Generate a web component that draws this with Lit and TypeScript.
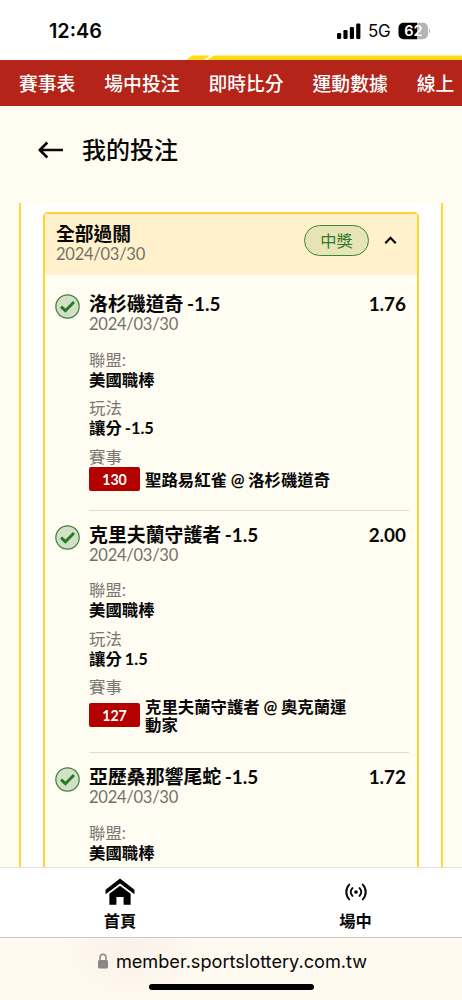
import { LitElement, html, css, svg } from "lit";
import { customElement, property } from "lit/decorators.js";

interface Leg {
  pick: string;
  date: string;
  odds: string;
  league: string;
  play: string;
  code: string;
  match: string;
}

const LEGS: Leg[] = [
  { pick: "洛杉磯道奇 -1.5", date: "2024/03/30", odds: "1.76", league: "美國職棒", play: "讓分 -1.5", code: "130", match: "聖路易紅雀 @ 洛杉磯道奇" },
  { pick: "克里夫蘭守護者 -1.5", date: "2024/03/30", odds: "2.00", league: "美國職棒", play: "讓分 1.5", code: "127", match: "克里夫蘭守護者 @ 奧克蘭運動家" },
  { pick: "亞歷桑那響尾蛇 -1.5", date: "2024/03/30", odds: "1.72", league: "美國職棒", play: "", code: "", match: "" },
];

@customElement("bet-leg")
export class BetLeg extends LitElement {
  @property({ attribute: false }) leg!: Leg;

  static styles = css`
    :host { display: flex; flex: none; padding: 0 8px 0 10px; }
    .check { flex: none; width: 25px; height: 25px; margin: 14px 9px 0 0; display: block; }
    .body { flex: 1; min-width: 0; padding: 14px 0 19px; border-bottom: 1px solid #dedbd3; }
    .top { display: flex; justify-content: space-between; padding-right: 3px; font-size: 18.9px; line-height: 20px; font-weight: 700; white-space: nowrap; word-spacing: -1px; }
    .date { font-size: 16.5px; line-height: 20px; letter-spacing: -0.25px; color: #73716c; margin-bottom: 15.5px; }
    .label { font-size: 16.4px; line-height: 19px; color: #7a7772; }
    .value { font-size: 16.4px; line-height: 21px; font-weight: 700; margin-bottom: 8.6px; word-spacing: -1px; }
    .match { display: flex; align-items: center; gap: 5px; padding-top: 1px; }
    .code { flex: none; width: 51px; height: 24px; border-radius: 2px; background: #b50000; color: #fff; font-size: 14.2px; line-height: 25px; font-weight: 700; text-align: center; }
    .teams { position: relative; top: 1px; width: 207px; font-size: 16.4px; line-height: 18px; font-weight: 700; word-spacing: -0.3px; }
  `;

  render() {
    const l = this.leg;
    return html`
      <svg class="check" viewBox="0 0 24 24" fill="none">
        <circle cx="12" cy="12" r="11.2" fill="#d3dfc8" stroke="#3f8539" stroke-width="1.2" />
        <path d="M5.8 12.100 10 16 18.200 7.700" stroke="#267b1d" stroke-width="2.800" />
      </svg>
      <div class="body">
        <div class="top"><span>${l.pick}</span><span>${l.odds}</span></div>
        <div class="date">${l.date}</div>
        <div class="label">聯盟:</div>
        <div class="value">${l.league}</div>
        ${l.play
          ? html`<div class="label">玩法</div>
              <div class="value">${l.play}</div>
              <div class="label">賽事</div>
              <div class="match"><span class="code">${l.code}</span><span class="teams">${l.match}</span></div>`
          : ""}
      </div>
    `;
  }
}

@customElement("app-root")
export class AppRoot extends LitElement {
  static styles = css`
    :host { display: flex; flex-direction: column; width: 462px; height: 1000px; overflow: hidden; background: #fffcf2; color: #080808; font-family: Lato, "Noto Sans CJK TC", sans-serif; }
    .status { flex: none; height: 55px; background: #fff; display: flex; align-items: center; box-sizing: border-box; padding: 7px 30px 0 49px; font-family: Inter, sans-serif; }
    .time { font-size: 19.8px; font-weight: 600; flex: 1; }
    .signal { width: 24px; height: 16px; margin-right: 7px; }
    .net { font-size: 17px; font-weight: 400; margin-right: 8px; width: 22px; letter-spacing: -0.4px; }
    .battery { width: 34px; height: 18px; }
    .stripe { flex: none; display: block; width: 462px; height: 5px; background: #fff; }
    .nav { flex: none; height: 46px; box-sizing: border-box; background: #b42419; color: #fff; display: flex; align-items: center; gap: 29px; padding: 0 0 2px 19px; font-size: 18.8px; font-weight: 500; white-space: nowrap; overflow: hidden; }
    .head { flex: none; height: 97px; box-sizing: border-box; padding: 0 0 9px 38px; display: flex; align-items: center; gap: 19px; font-size: 24px; font-weight: 500; }
    .head span { padding-bottom: 3px; }
    .back { width: 25px; height: 20px; }
    .panel { flex: 1; min-height: 0; overflow: hidden; margin: 0 19px; padding: 9px 22px 0 22px; background: #fff; border: solid #ffd92f; border-width: 0 2px; }
    .card { border: 2px solid #ffd52b; border-radius: 5px; background: #fffcf2; display: flex; flex-direction: column; }
    .summary { height: 61px; margin-bottom: 5px; box-sizing: border-box; background: #fef1cb; display: flex; align-items: flex-start; padding: 10px 20px 0 11px; }
    .names { flex: 1; }
    .kind { font-size: 18.8px; line-height: 20px; font-weight: 700; }
    .when { font-size: 16.5px; line-height: 20px; letter-spacing: -0.25px; color: #73716c; }
    .won { width: 63px; height: 29px; border: 1px solid #3f8539; border-radius: 16px; background: #e7e5b8; color: #2f7a27; text-align: center; font-size: 16.3px; line-height: 30px; font-weight: 400; margin: 1px 15px 0 0; }
    .caret { width: 13px; height: 10px; margin-top: 11px; }
    .tabs { flex: none; height: 71px; box-sizing: border-box; background: #fff; border-top: 1px solid #e5e4e2; border-bottom: 1px solid #cfcdc9; display: grid; grid-template-columns: 240px 231px; }
    .tab { display: flex; flex-direction: column; align-items: center; font-size: 16.3px; font-weight: 700; line-height: 20px; padding-top: 9px; gap: 4.5px; }
    .glyph { width: 32px; height: 29px; }
    .url { flex: none; height: 62px; display: flex; flex-direction: column; align-items: center; background: radial-gradient(ellipse 80px 60px at 130px 10px, #fbf1e8, transparent), #fffaf0; }
    .address { display: flex; align-items: center; gap: 7px; height: 46px; padding-left: 2px; font-family: Inter, sans-serif; font-size: 18.15px; white-space: nowrap; }
    .lock { width: 12px; height: 16px; }
    .bar { width: 165px; height: 6px; border-radius: 3px; background: #000; }
  `;

  private home = svg`
    <path d="M16 1.500 31 13.2V17.800L16 6.600 1 17.800V13.2Z" fill="#000" />
    <path d="M16 9 27 17.2V28.600H19.700V20.700H12.300V28.600H5V17.2Z" fill="#000" />`;

  private live = svg`
    <g fill="none" stroke="#080808" stroke-width="2.1" stroke-linecap="round">
      <circle cx="16" cy="15.500" r="1.900" fill="#080808" stroke="none" />
      <path d="M12.300 11.500a5.800 5.800 0 0 0 0 8M19.700 11.500a5.800 5.800 0 0 1 0 8" />
      <path d="M9 7.900a11 11 0 0 0 0 15.200M23 7.900a11 11 0 0 1 0 15.200" />
    </g>`;

  render() {
    return html`
      <div class="status">
        <span class="time">12:46</span>
        <svg class="signal" viewBox="0 0 24 16">
          <rect x="0" y="10" width="4.2" height="6" rx="1.2" />
          <rect x="6.4" y="7" width="4.2" height="9" rx="1.2" />
          <rect x="12.8" y="4" width="4.2" height="12" rx="1.2" />
          <rect x="19.2" y="0.5" width="4.2" height="15.5" rx="1.2" />
        </svg>
        <span class="net">5G</span>
        <svg class="battery" viewBox="0 0 34 18">
          <path d="M18.500 0.700H25a5 5 0 0 1 5 5v6.600a5 5 0 0 1-5 5h-6.500Z" fill="#b4b4b4" />
          <path d="M19 0.700H5.500a5 5 0 0 0-5 5v6.600a5 5 0 0 0 5 5H19Z" fill="#000" />
          <path d="M31 6.500q2.500 2.500 0 5Z" fill="#b4b4b4" />
          <text x="15.300" y="14.200" text-anchor="middle" font-family="Inter" font-size="14.500" font-weight="600" fill="#fff">62</text>
        </svg>
      </div>
      <svg class="stripe" viewBox="0 0 462 5">
        <path d="M186 5 192.500 0.500H210L204 5ZM207 5 214 0.500H462V5Z" fill="#ffdc10" />
      </svg>
      <nav class="nav">
        ${["賽事表", "場中投注", "即時比分", "運動數據", "線上"].map((t) => html`<span>${t}</span>`)}
      </nav>
      <header class="head">
        <svg class="back" viewBox="0 0 25 20" fill="none" stroke="#080808" stroke-width="2.600">
          <path d="M1.500 10H25M9.300 2.500 1.800 10 9.300 17.500" stroke-linejoin="round" />
        </svg>
        <span>我的投注</span>
      </header>
      <main class="panel">
        <section class="card">
          <div class="summary">
            <div class="names">
              <div class="kind">全部過關</div>
              <div class="when">2024/03/30</div>
            </div>
            <span class="won">中獎</span>
            <svg class="caret" viewBox="0 0 13 10" fill="none" stroke="#080808" stroke-width="2.200">
              <path d="M1.300 8.300 6.500 2.800 11.700 8.300" />
            </svg>
          </div>
          ${LEGS.map((l) => html`<bet-leg .leg=${l}></bet-leg>`)}
        </section>
      </main>
      <nav class="tabs">
        <div class="tab"><svg class="glyph" viewBox="0 0 32 30">${this.home}</svg><span>首頁</span></div>
        <div class="tab"><svg class="glyph" viewBox="0 0 32 30">${this.live}</svg><span>場中</span></div>
      </nav>
      <footer class="url">
        <div class="address">
          <svg class="lock" viewBox="0 0 12 16">
            <path d="M3 8V4.500a3 3.300 0 0 1 6 0V8" fill="none" stroke="#8b8885" stroke-width="1.500" />
            <rect x="1" y="7" width="10" height="8.500" rx="1.500" fill="#8b8885" />
          </svg>
          <span>member.sportslottery.com.tw</span>
        </div>
        <div class="bar"></div>
      </footer>
    `;
  }
}
